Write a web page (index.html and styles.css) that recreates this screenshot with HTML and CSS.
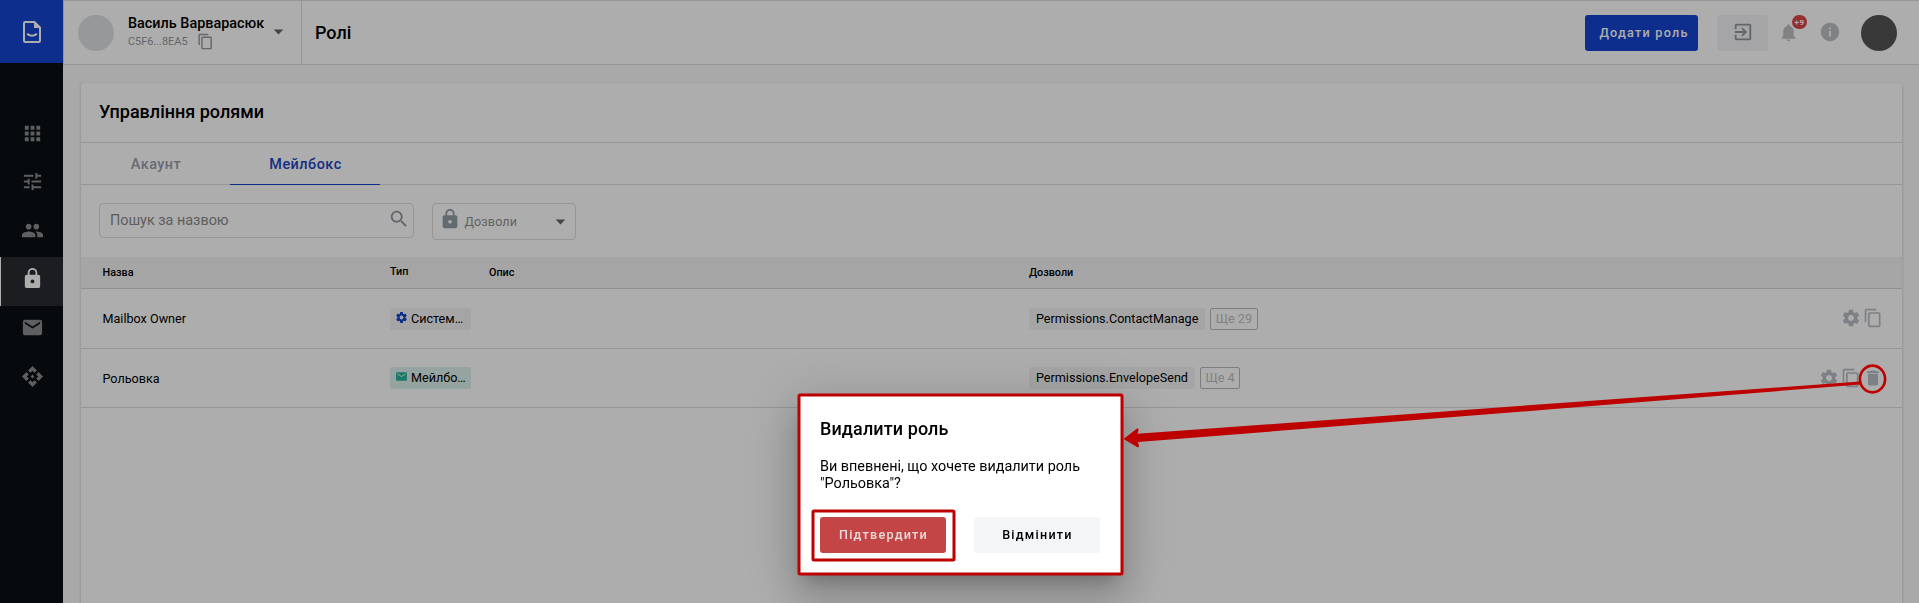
FILE: index.html
```html
<!DOCTYPE html>
<html lang="uk">
<head>
<meta charset="utf-8">
<title>Ролі</title>
<link rel="stylesheet" href="styles.css">
</head>
<body>
<svg class="sprite" aria-hidden="true">
  <symbol id="apps" viewBox="0 0 24 24"><path d="M4 8h4V4H4v4zm6 12h4v-4h-4v4zm-6 0h4v-4H4v4zm0-6h4v-4H4v4zm6 0h4v-4h-4v4zm6-10v4h4V4h-4zm-6 4h4V4h-4v4zm6 6h4v-4h-4v4zm0 6h4v-4h-4v4z"/></symbol>
  <symbol id="tune" viewBox="0 0 24 24"><path d="M3 17v2h6v-2H3zM3 5v2h10V5H3zm10 16v-2h8v-2h-8v-2h-2v6h2zM7 9v2H3v2h4v2h2V9H7zm14 4v-2H11v2h10zm-6-4h2V7h4V5h-4V3h-2v6z"/></symbol>
  <symbol id="people" viewBox="0 0 24 24"><path d="M16 11c1.66 0 2.99-1.34 2.99-3S17.660 5 16 5s-3 1.340-3 3 1.340 3 3 3zm-8 0c1.660 0 2.990-1.340 2.990-3S9.660 5 8 5 5 6.340 5 8s1.340 3 3 3zm0 2c-2.330 0-7 1.170-7 3.500V19h14v-2.500c0-2.330-4.670-3.500-7-3.500zm8 0c-.29 0-.62.02-.97.05 1.160.84 1.970 1.970 1.970 3.450V19h6v-2.500c0-2.330-4.670-3.500-7-3.500z"/></symbol>
  <symbol id="lock" viewBox="0 0 24 24"><path d="M18 8h-1V6c0-2.760-2.240-5-5-5S7 3.240 7 6v2H6c-1.100 0-2 .9-2 2v10c0 1.100.9 2 2 2h12c1.100 0 2-.9 2-2V10c0-1.100-.9-2-2-2zm-6 9c-1.100 0-2-.9-2-2s.9-2 2-2 2 .9 2 2-.9 2-2 2zm3.100-9H8.900V6c0-1.710 1.390-3.100 3.100-3.100s3.100 1.390 3.100 3.100v2z"/></symbol>
  <symbol id="mail" viewBox="0 0 24 24"><path d="M20 4H4c-1.100 0-1.990.9-1.990 2L2 18c0 1.100.9 2 2 2h16c1.100 0 2-.9 2-2V6c0-1.100-.9-2-2-2zm0 4l-8 5-8-5V6l8 5 8-5v2z"/></symbol>
  <symbol id="api" viewBox="0 0 24 24"><path d="M14 12l-2 2-2-2 2-2 2 2zm-2-6l2.120 2.120 2.500-2.500L12 1 7.380 5.620l2.500 2.500L12 6zm-6 6l2.120-2.120-2.500-2.500L1 12l4.620 4.620 2.500-2.500L6 12zm12 0l-2.120 2.120 2.500 2.500L23 12l-4.620-4.620-2.500 2.500L18 12zm-6 6l-2.120-2.120-2.500 2.500L12 23l4.620-4.620-2.500-2.500L12 18z"/></symbol>
  <symbol id="copy" viewBox="0 0 24 24"><path d="M16 1H4c-1.100 0-2 .9-2 2v14h2V3h12V1zm3 4H8c-1.100 0-2 .9-2 2v14c0 1.100.9 2 2 2h11c1.100 0 2-.9 2-2V7c0-1.100-.9-2-2-2zm0 16H8V7h11v14z"/></symbol>
  <symbol id="caret" viewBox="0 0 24 24"><path d="M7 10l5 5 5-5z"/></symbol>
  <symbol id="exit" viewBox="0 0 24 24"><path d="M10.090 15.590L11.500 17l5-5-5-5-1.410 1.410L12.670 11H3v2h9.670l-2.580 2.590zM19 3H5c-1.110 0-2 .9-2 2v4h2V5h14v14H5v-4H3v4c0 1.100.89 2 2 2h14c1.100 0 2-.9 2-2V5c0-1.100-.9-2-2-2z"/></symbol>
  <symbol id="bell" viewBox="0 0 24 24"><path d="M12 22c1.100 0 2-.9 2-2h-4c0 1.100.89 2 2 2zm6-6v-5c0-3.070-1.640-5.640-4.500-6.320V4c0-.83-.67-1.500-1.500-1.500s-1.500.67-1.500 1.500v.68C7.630 5.360 6 7.920 6 11v5l-2 2v1h16v-1l-2-2z"/></symbol>
  <symbol id="info" viewBox="0 0 24 24"><path d="M12 2C6.480 2 2 6.480 2 12s4.480 10 10 10 10-4.480 10-10S17.520 2 12 2zm1 15h-2v-6h2v6zm0-8h-2V7h2v2z"/></symbol>
  <symbol id="search" viewBox="0 0 24 24"><path d="M15.500 14h-.79l-.28-.27C15.410 12.590 16 11.110 16 9.500 16 5.910 13.090 3 9.500 3S3 5.910 3 9.500 5.910 16 9.500 16c1.610 0 3.090-.59 4.230-1.570l.27.28v.79l5 4.990L20.490 19l-4.990-5zm-6 0C7.010 14 5 11.990 5 9.500S7.010 5 9.500 5 14 7.010 14 9.500 11.990 14 9.500 14z"/></symbol>
  <symbol id="gear" viewBox="0 0 24 24"><path d="M19.430 12.980c.04-.32.07-.64.07-.98s-.03-.66-.07-.98l2.110-1.650c.19-.15.24-.42.12-.64l-2-3.460c-.12-.22-.39-.3-.61-.22l-2.490 1c-.52-.4-1.080-.73-1.690-.98l-.38-2.650C14.460 2.180 14.250 2 14 2h-4c-.25 0-.46.18-.49.42l-.38 2.650c-.61.25-1.170.59-1.690.98l-2.490-1c-.23-.09-.49 0-.61.22l-2 3.460c-.13.22-.07.49.12.64l2.110 1.650c-.04.32-.07.65-.07.98s.03.66.07.98l-2.110 1.650c-.19.15-.24.42-.12.64l2 3.460c.12.22.39.3.61.22l2.490-1c.52.4 1.080.73 1.690.98l.38 2.650c.03.24.24.42.49.42h4c.25 0 .46-.18.49-.42l.38-2.650c.61-.25 1.170-.59 1.690-.98l2.490 1c.23.09.49 0 .61-.22l2-3.460c.12-.22.07-.49-.12-.64l-2.110-1.650zM12 15.500c-1.930 0-3.500-1.570-3.500-3.500s1.570-3.500 3.500-3.500 3.500 1.570 3.500 3.500-1.570 3.500-3.500 3.500z"/></symbol>
  <symbol id="trash" viewBox="0 0 24 24"><path d="M6 19c0 1.100.9 2 2 2h8c1.100 0 2-.9 2-2V7H6v12zM19 4h-3.500l-1-1h-5l-1 1H5v2h14V4z"/></symbol>
</svg>

<div class="app">
  <nav class="sidebar">
    <a class="logo"><svg width="18" height="22" viewBox="0 0 18 22"><path d="M2.200 1H11.500L17 6.500V19.800Q17 21 15.800 21H2.200Q1 21 1 19.800V2.200Q1 1 2.200 1Z" fill="none" stroke="currentColor" stroke-width="2"/><path d="M11 1H12L17 6V7H11Z"/><path d="M4 12.800Q9 16.800 14 12.800" fill="none" stroke="currentColor" stroke-width="2"/></svg></a>
    <div class="menu">
      <a class="menu-item"><svg><use href="#apps"/></svg></a>
      <a class="menu-item"><svg><use href="#tune"/></svg></a>
      <a class="menu-item"><svg><use href="#people"/></svg></a>
      <a class="menu-item active"><svg><use href="#lock"/></svg></a>
      <a class="menu-item"><svg><use href="#mail"/></svg></a>
      <a class="menu-item"><svg><use href="#api"/></svg></a>
    </div>
  </nav>
  <div class="main">
    <header class="header">
      <div class="account">
        <span class="avatar"></span>
        <div class="account-text">
          <div class="account-name">Василь Варварасюк</div>
          <div class="account-id"><span>C5F6...8EA5</span><svg class="copy-icon"><use href="#copy"/></svg></div>
        </div>
        <svg class="caret"><use href="#caret"/></svg>
      </div>
      <h1 class="page-title">Ролі</h1>
      <div class="header-actions">
        <button class="add-button">Додати роль</button>
        <button class="exit-button"><svg><use href="#exit"/></svg></button>
        <span class="bell"><svg><use href="#bell"/></svg><span class="badge">+9</span></span>
        <svg class="info"><use href="#info"/></svg>
        <span class="user"></span>
      </div>
    </header>
    <section class="card">
      <h2 class="card-title">Управління ролями</h2>
      <div class="tabs">
        <span class="tab">Акаунт</span>
        <span class="tab selected">Мейлбокс</span>
      </div>
      <div class="filters">
        <div class="search"><span>Пошук за назвою</span><svg><use href="#search"/></svg></div>
        <div class="select"><svg class="select-lock"><use href="#lock"/></svg><span>Дозволи</span><svg class="caret"><use href="#caret"/></svg></div>
      </div>
      <div class="table">
        <div class="row head"><span>Назва</span><span class="head-type">Тип</span><span>Опис</span><span>Дозволи</span><span></span></div>
        <div class="row first">
          <span class="name">Mailbox Owner</span>
          <span class="chip type"><svg><use href="#gear"/></svg>Систем…</span>
          <span></span>
          <span class="permissions"><span class="chip">Permissions.ContactManage</span><span class="chip more">Ще 29</span></span>
          <span class="actions"><svg><use href="#gear"/></svg><svg><use href="#copy"/></svg></span>
        </div>
        <div class="row">
          <span class="name">Рольовка</span>
          <span class="chip type mailbox"><svg><use href="#mail"/></svg>Мейлбо…</span>
          <span></span>
          <span class="permissions"><span class="chip">Permissions.EnvelopeSend</span><span class="chip more">Ще 4</span></span>
          <span class="actions"><svg><use href="#gear"/></svg><svg><use href="#copy"/></svg><svg><use href="#trash"/></svg></span>
        </div>
      </div>
    </section>
  </div>
</div>

<div class="backdrop"></div>
<div class="dialog" role="dialog">
  <h3 class="dialog-title">Видалити роль</h3>
  <p class="dialog-text">Ви впевнені, що хочете видалити роль "Рольовка"?</p>
  <div class="dialog-actions">
    <button class="confirm">Підтвердити</button>
    <button class="cancel">Відмінити</button>
  </div>
</div>

<svg class="annotations" viewBox="0 0 1919 603">
  <g fill="none" stroke="#bd0000">
    <rect x="799" y="395" width="323" height="179" rx="1" stroke-width="3"/>
    <rect x="813" y="511" width="141" height="49" rx="1" stroke-width="3"/>
    <ellipse cx="1872.500" cy="379" rx="12.600" ry="13.400" stroke-width="2.600"/>
  </g>
  <path d="M1123.500 439L1137 428.500Q1139 428 1138.500 430L1137.500 433.800L1560 403L1860 381.500V384.500L1560 408.600L1138 442L1139 446Q1139 448 1137 447Z" fill="#bd0000"/>
</svg>
</body>
</html>
```

FILE: styles.css
```css
* { box-sizing: border-box; }

body {
  margin: 0;
  height: 603px;
  overflow: hidden;
  font-family: Roboto, "Liberation Sans", sans-serif;
  color: #000;
  background: #f9f9fa;
}

svg { display: block; fill: currentColor; flex: none; }
.sprite { display: none; }
h1, h2, h3, p { margin: 0; }
button { border: 0; padding: 0; font: inherit; }

.app { display: flex; height: 603px; }

/* Sidebar */
.sidebar { width: 63px; flex: none; background: #0a1014; }
.logo {
  height: 63px;
  display: flex;
  align-items: center;
  justify-content: center;
  padding: 1px 0 0 1px;
  background: #1444ce;
  color: #fff;
}
.menu { padding-top: 48px; }
.menu-item {
  height: 48.700px;
  display: flex;
  justify-content: center;
  padding: 10.500px 0 0 2px;
  color: #8b8c8e;
}
.menu-item svg { width: 23px; height: 23px; }
.menu-item.active {
  background: #292b31;
  color: #fff;
  border-left: 1px solid #fff;
  padding-left: 1px;
  padding-top: 9.500px;
}

/* Header */
.main { flex: 1; min-width: 0; display: flex; flex-direction: column; }
.header {
  height: 65px;
  flex: none;
  display: flex;
  border: solid #ddd;
  border-width: 1px 0 1px 1px;
  background: #fff;
}
.account {
  width: 238px;
  display: flex;
  padding: 14px 0 0 14px;
  border-right: 1px solid #ddd;
}
.avatar { width: 36px; height: 36px; border-radius: 50%; background: #dee0e3; }
.account-text { width: 140px; padding-left: 14px; flex: none; }
.account-name { font-size: 14.400px; font-weight: 500; line-height: 17px; white-space: nowrap; }
.account-id {
  display: flex;
  align-items: center;
  gap: 9px;
  height: 19px;
  font-size: 10.900px;
  line-height: 17px;
  color: #92989e;
}
.account-id span { margin-top: -1px; }
.copy-icon { width: 17px; height: 17px; }
.caret { width: 23px; height: 23px; color: #666; }
.account .caret { margin: 5px 0 0 13px; }
.page-title { padding: 20px 0 0 13px; font-size: 18px; line-height: 24px; font-weight: 500; }
.header-actions { margin-left: auto; display: flex; padding: 14px 22px 0 0; }
.add-button {
  width: 113px;
  height: 36px;
  border-radius: 3px;
  background: #1444ce;
  color: #fff;
  font-size: 12.600px;
  font-weight: 500;
  letter-spacing: 1.250px;
  padding: 0 0 1px 5px;
}
.exit-button {
  width: 51px;
  height: 36px;
  margin-left: 19px;
  border-radius: 3px;
  background: #f3f4f6;
  color: #8e979e;
  display: flex;
  justify-content: center;
  align-items: center;
}
.exit-button svg { width: 22px; height: 22px; margin: -2px 0 0 1px; }
.bell { position: relative; margin: 7px 0 0 10px; color: #bfc0c2; }
.bell svg { width: 21px; height: 21px; }
.badge {
  position: absolute;
  top: -7px;
  left: 14px;
  width: 15px;
  height: 14px;
  border-radius: 7px;
  background: #dc4545;
  color: #fff;
  font-size: 8px;
  line-height: 15px;
  letter-spacing: .5px;
  text-align: center;
  font-weight: 700;
}
.info { width: 22px; height: 22px; margin: 6px 0 0 20px; color: #bfc0c2; }
.user { width: 36px; height: 36px; margin-left: 20px; border-radius: 50%; background: #555; }

/* Card */
.card {
  flex: 1;
  margin: 17px 16px 0 17px;
  border: 1px solid #e8e8e8;
  border-top-color: #f3f3f3;
  border-bottom: 0;
  border-radius: 4px 4px 0 0;
  background: #fff;
  box-shadow: 0 1px 2px rgba(0, 0, 0, .12);
}
.card-title {
  height: 60px;
  padding: 17px 0 0 18px;
  border-bottom: 1px solid #ddd;
  font-size: 18px;
  font-weight: 500;
  line-height: 24px;
}
.tabs { display: flex; height: 42px; border-bottom: 1px solid #ddd; }
.tab {
  width: 149px;
  height: 42px;
  padding-left: 1px;
  text-align: center;
  font-size: 14.400px;
  font-weight: 500;
  line-height: 43px;
  letter-spacing: .5px;
  color: #979ea5;
}
.tab.selected { width: 150px; color: #1c45c2; border-bottom: 1px solid #1444ce; }
.filters { display: flex; align-items: flex-start; gap: 18px; padding: 18px 0 0 18px; height: 72px; }
.search {
  width: 315px;
  height: 35px;
  display: flex;
  justify-content: space-between;
  padding: 0 3px 0 10px;
  border: 1px solid #ddd;
  border-radius: 4px;
  font-size: 14.400px;
  line-height: 34px;
  color: #8b8b8b;
}
.search svg { width: 22px; height: 22px; margin-top: 4px; color: #929aa2; }
.select {
  width: 144px;
  height: 37px;
  display: flex;
  padding-left: 6px;
  border: 1px solid #ddd;
  border-radius: 4px;
  font-size: 12.600px;
  line-height: 36px;
  letter-spacing: .1px;
  color: #929292;
}
.select-lock { width: 22px; height: 22px; margin: 4px 3.500px 0 0; color: #929ca6; }
.select .caret { margin: 6px 3px 0 auto; }

/* Table */
.row {
  height: 59px;
  display: grid;
  grid-template-columns: 287.500px 99px 540px 1fr auto;
  align-items: center;
  padding: 0 19.500px 0 21.500px;
  border-bottom: 1px solid #ddd;
  font-size: 12.600px;
}
.row.first { height: 60px; }
.row.head {
  height: 32px;
  background: #f3f4f5;
  border-color: #d5d5d5;
  font-size: 10.800px;
  font-weight: 500;
}
.head-type { margin-top: -2px; }
.chip {
  height: 22px;
  padding: 0 7px;
  border-radius: 2px;
  background: #f3f4f5;
  line-height: 22px;
  white-space: nowrap;
}
.chip.type { width: 81px; display: flex; gap: 3px; padding: 0 5px; }
.type svg { width: 13px; height: 13px; margin-top: 3px; color: #1444ce; }
.chip.mailbox { background: #def2ed; }
.mailbox svg { color: #25b298; }
.permissions { display: flex; gap: 5px; }
.chip.more { padding: 0 4.500px; border: 1px solid #b7bac0; background: none; color: #bcbfc3; line-height: 20px; }
.actions { display: flex; align-items: center; gap: 1.700px; margin-top: -1px; color: #b8bdc3; }
.actions svg { width: 20px; height: 20px; }

/* Dialog */
.backdrop { position: fixed; inset: 0; background: rgba(0, 0, 0, .32); }
.dialog {
  position: absolute;
  left: 798px;
  top: 394px;
  width: 325px;
  height: 181px;
  padding: 23px 22px 0;
  background: #fff;
  box-shadow: 0 11px 15px -7px rgba(0, 0, 0, .2), 0 24px 38px 3px rgba(0, 0, 0, .14), 0 9px 46px 8px rgba(0, 0, 0, .12);
}
.dialog-title { font-size: 18px; font-weight: 500; line-height: 24px; letter-spacing: .1px; }
.dialog-text { margin-top: 17px; font-size: 14.400px; line-height: 17px; }
.dialog-actions { display: flex; gap: 28px; margin-top: 25px; }
.dialog-actions button { width: 126px; height: 36px; padding: 0 0 1px 1px; border-radius: 3px; font-size: 12.600px; font-weight: 500; letter-spacing: 1.250px; }
.confirm { background: #c34545; color: #e4dcdc; }
.cancel { background: #f4f5f7; color: #000; }

.annotations { position: absolute; left: 0; top: 0; width: 1919px; height: 603px; pointer-events: none; }
```
